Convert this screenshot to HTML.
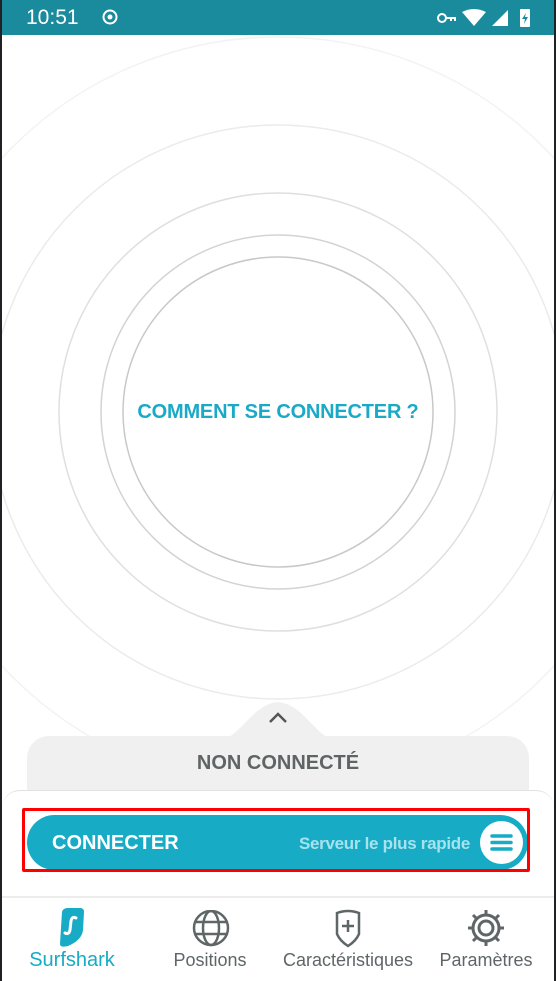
<!DOCTYPE html>
<html><head><meta charset="utf-8"><style>
html,body{margin:0;padding:0}
body{width:556px;height:981px;position:relative;overflow:hidden;background:#202124;font-family:"Liberation Sans",sans-serif}
.app{position:absolute;left:2px;right:2px;top:0;bottom:0;background:#fff;overflow:hidden}
.sb{position:absolute;left:0;right:0;top:0;height:35px;background:#1a8a9d;color:#fff}
.t{position:absolute;left:24px;top:6px;font-size:21px}
svg{position:absolute}
.q{position:absolute;left:0;right:0;top:401px;text-align:center;color:#1aa9c6;font-weight:bold;font-size:20px;letter-spacing:-0.2px}
.panel{position:absolute;left:25px;right:25px;top:736px;height:70px;background:#f0f0f0;border-radius:22px 22px 0 0}
.nc{position:absolute;left:0;right:0;top:752px;text-align:center;color:#5f6465;font-weight:bold;font-size:20px}
.sheet{position:absolute;left:0;right:0;top:790px;height:110px;background:#fff;border-top:1px solid #e2e2e2;border-radius:18px 18px 0 0}
.red{position:absolute;left:20px;top:808px;width:508px;height:64px;border:3px solid #f00;box-sizing:border-box;border-radius:2px}
.btn{position:absolute;left:25px;top:815px;width:501px;height:55px;background:#17abc6;border-radius:28px}
.btn .c{position:absolute;left:25px;top:17px;color:#fff;font-weight:bold;font-size:20px}
.btn .s{position:absolute;right:58px;top:19px;color:#a8e2ec;font-weight:bold;font-size:17px;letter-spacing:-0.3px}
.btn .m{position:absolute;right:5px;top:6px;width:43px;height:43px;border-radius:50%;background:#fff}
.nav{position:absolute;left:0;right:0;top:896px;height:85px;border-top:2px solid #ececec;background:#fff}
.l{position:absolute;top:52px;font-size:18px;color:#5f6668;width:140px;text-align:center}
</style></head><body><div class="app">
<svg width="552" height="981" style="left:0;top:0">
<g fill="none" transform="translate(276,412)">
<circle r="375" stroke="#f3f3f3" stroke-width="1.5"/>
<circle r="287" stroke="#ebebeb" stroke-width="1.5"/>
<circle r="219" stroke="#dfdfdf" stroke-width="1.5"/>
<circle r="177" stroke="#d3d3d3" stroke-width="1.5"/>
<circle r="155" stroke="#c8c8c8" stroke-width="1.5"/>
</g>
<path d="M200 745 C240 745 245 705 276 702 C307 705 312 745 352 745 Z" fill="#f0f0f0"/>
<path d="M268 722 L276 714 L284 722" stroke="#555" stroke-width="2.5" fill="none"/>
</svg>
<div class="sb"><div class="t">10:51</div>
<svg width="16" height="16" style="left:100px;top:9px"><circle cx="8" cy="8" r="6.5" fill="none" stroke="#fff" stroke-width="2"/><circle cx="8" cy="8" r="2.5" fill="#fff"/></svg>
<svg width="110" height="24" style="left:434px;top:6px">
<circle cx="6" cy="12" r="4" fill="none" stroke="#fff" stroke-width="2"/><path d="M10 11h10v4h-2v-2h-2v2h-2v-2h-4z" fill="#fff"/>
<path d="M26 6 Q38 0 50 6 L38 20 Z" fill="#fff"/>
<path d="M56 20 L72 4 L72 20 Z" fill="#fff"/>
<rect x="84" y="3" width="10" height="18" rx="1" fill="#fff"/><path d="M90 7 L86 13 L89 13 L88 18 L92 11 L89 11 Z" fill="#1a8a9d"/>
</svg></div>
<div class="q">COMMENT SE CONNECTER ?</div>
<div class="panel"></div>
<div class="nc">NON CONNECTÉ</div>
<div class="sheet"></div>
<div class="btn"><div class="c">CONNECTER</div><div class="s">Serveur le plus rapide</div><div class="m">
<svg width="43" height="43" style="left:0;top:0"><path d="M12 15h19M12 21.5h19M12 28h19" stroke="#17abc6" stroke-width="3.5" stroke-linecap="round"/></svg></div></div>
<div class="red"></div>
<div class="nav">
<svg width="40" height="44" style="left:52px;top:8px"><path d="M8 6 Q9 2 14 2 L26 2 Q30 2 30 6 L29 24 Q28 34 14 40 Q6 42 6 38 Z" fill="#17abc6"/><path d="M22 12 Q18 10 17 15 L16 24 Q15 29 11 27" stroke="#fff" stroke-width="3" fill="none" stroke-linecap="round"/></svg>
<svg width="40" height="40" style="left:189px;top:12px"><g fill="none" stroke="#5f6668" stroke-width="2.5"><circle cx="20" cy="18" r="17"/><ellipse cx="20" cy="18" rx="8" ry="17"/><path d="M4 12h32M4 24h32"/></g></svg>
<svg width="40" height="40" style="left:326px;top:10px"><g fill="none" stroke="#5f6668" stroke-width="2.5"><path d="M9 5 Q20 1 31 5 V26 Q28 33 20 38 Q12 33 9 26 Z"/><path d="M20 12v12M14 18h12"/></g></svg>
<svg width="40" height="40" style="left:464px;top:10px"><g fill="none" stroke="#5f6668" stroke-width="3"><circle cx="20" cy="20" r="13"/><circle cx="20" cy="20" r="7"/><path d="M20 2v5M20 33v5M2 20h5M33 20h5M7 7l4 4M29 29l4 4M7 33l4-4M29 11l4-4"/></g></svg>
<div class="l" style="left:0;color:#17abc6;font-size:20px;top:51px">Surfshark</div>
<div class="l" style="left:138px">Positions</div>
<div class="l" style="left:275px;width:142px">Caractéristiques</div>
<div class="l" style="left:414px">Paramètres</div>
</div>
</div></body></html>
